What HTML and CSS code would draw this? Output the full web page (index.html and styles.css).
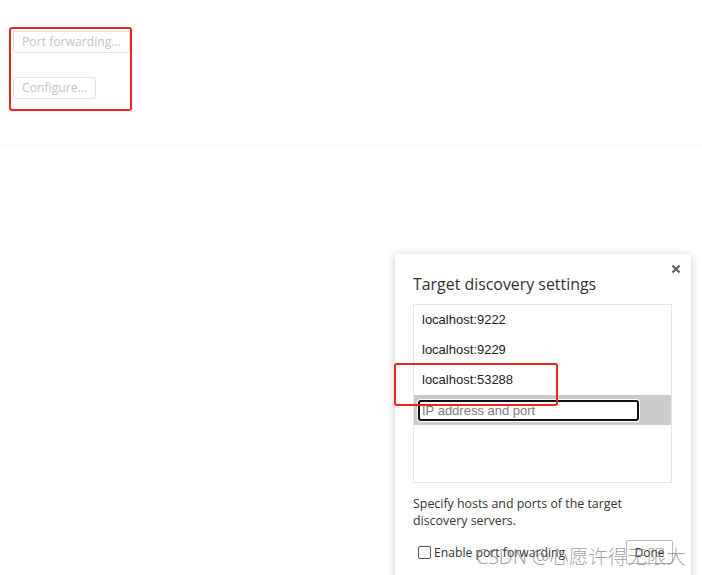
FILE: index.html
```html
<!DOCTYPE html>
<html>
<head>
<meta charset="utf-8">
<link rel="stylesheet" href="styles.css">
</head>
<body>
<div class="top">
  <button class="btn-disabled" disabled>Port forwarding...</button>
  <button class="btn-disabled second" disabled>Configure...</button>
</div>
<div class="rest"></div>

<div class="dialog">
  <svg class="close" width="10" height="10" viewBox="0 0 10 10"><path d="M1.5 1.5L8.5 8.5M8.5 1.5L1.5 8.5" stroke="#5f5f5f" stroke-width="2.2"/></svg>
  <div class="title">Target discovery settings</div>
  <div class="list">
    <div class="item">localhost:9222</div>
    <div class="item">localhost:9229</div>
    <div class="item">localhost:53288</div>
    <div class="edit-row"><div class="input">IP address and port</div></div>
  </div>
  <div class="desc">Specify hosts and ports of the target discovery servers.</div>
  <div class="footer">
    <label class="check"><span class="box"></span>Enable port forwarding</label>
    <button class="done">Done</button>
  </div>
</div>

<div class="mark mark-top"></div>
<div class="mark mark-item"></div>
<div class="watermark">CSDN @心愿许得无限大</div>
</body>
</html>
```
FILE: styles.css
```css
html, body { margin: 0; padding: 0; }
body {
  width: 702px;
  height: 575px;
  overflow: hidden;
  background: #fff;
  font-family: "Open Sans", "Noto Sans", sans-serif;
  position: relative;
}
.top {
  height: 114px;
  padding: 31px 0 0 13px;
  border-bottom: 1px solid #f5f5f5;
  display: flex;
  flex-direction: column;
  align-items: flex-start;
}
.btn-disabled {
  font-family: "Open Sans", sans-serif;
  font-size: 12.2px;
  color: #c3c3c3;
  background: #fff;
  border: 1px solid #e3e3e3;
  border-radius: 2px;
  height: 22px;
  padding: 0 8px;
  line-height: 20px;
}
.btn-disabled.second { margin-top: 24px; }
.rest { height: 430px; background: #fff; }

.dialog {
  position: absolute;
  left: 395px;
  top: 254px;
  width: 260px;
  height: 330px;
  padding: 18px 18px 0 18px;
  background: #fff;
  border-radius: 2px;
  box-shadow: 0 2px 10px rgba(0,0,0,0.22);
}
.close { position: absolute; right: 10px; top: 10px; }
.title {
  font-size: 15.9px;
  color: #303030;
  line-height: 24px;
  height: 24px;
  white-space: nowrap;
}
.list {
  margin-top: 8px;
  width: 257px;
  height: 177px;
  border: 1px solid #e6e6e6;
}
.item {
  height: 30px;
  line-height: 30px;
  padding-left: 8px;
  font-family: "Liberation Sans", Arial, sans-serif;
  font-size: 13px;
  color: #222;
}
.edit-row {
  height: 30px;
  background: #cbcbcb;
  padding: 5px 0 0 4px;
  box-sizing: border-box;
}
.input {
  width: 215px;
  height: 17px;
  border: 2px solid #111;
  border-radius: 3px;
  background: #fff;
  font-family: "Liberation Sans", Arial, sans-serif;
  font-size: 13px;
  color: #7a7a7a;
  line-height: 17px;
  padding-left: 2px;
  box-shadow: 0 0 0 1px #fff;
}
.desc {
  margin-top: 12px;
  width: 245px;
  font-size: 12.4px;
  line-height: 17px;
  color: #333;
}
.footer {
  margin-top: 11px;
  display: flex;
  align-items: center;
  justify-content: space-between;
  width: 260px;
}
.check {
  display: flex;
  align-items: center;
  font-size: 12.2px;
  color: #333;
  padding-left: 5px;
}
.box {
  width: 11px;
  height: 11px;
  border: 1px solid #555;
  border-radius: 2px;
  margin-right: 3px;
}
.done {
  font-family: "Open Sans", sans-serif;
  font-size: 12px;
  color: #333;
  background: #fff;
  border: 1px solid #b8b8b8;
  border-radius: 2px;
  height: 24px;
  width: 47px;
  padding: 0;
}
.mark {
  position: absolute;
  border: 2px solid #f02222;
  border-radius: 3px;
}
.mark-top { left: 9px; top: 27px; width: 119px; height: 80px; }
.mark-item { left: 394px; top: 363px; width: 160px; height: 39px; }
.watermark {
  position: absolute;
  left: 476px;
  top: 541px;
  font-family: "Noto Sans", "Noto Sans CJK SC", sans-serif;
  font-size: 19.5px;
  font-weight: 300;
  color: rgba(120,120,120,0.7);
  white-space: nowrap;
}
```
